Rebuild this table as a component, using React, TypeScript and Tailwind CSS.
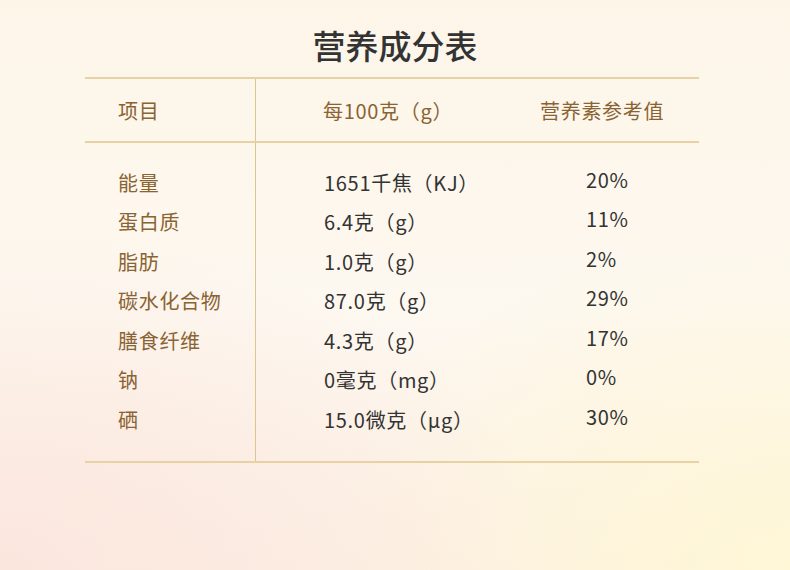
import React from "react";

const rows: [string, string, string][] = [
  ["能量", "1651千焦（KJ）", "20%"],
  ["蛋白质", "6.4克（g）", "11%"],
  ["脂肪", "1.0克（g）", "2%"],
  ["碳水化合物", "87.0克（g）", "29%"],
  ["膳食纤维", "4.3克（g）", "17%"],
  ["钠", "0毫克（mg）", "0%"],
  ["硒", "15.0微克（μg）", "30%"],
];

export default function App() {
  return (
    <div
      className="w-[790px] h-[570px] overflow-hidden bg-[#fdf6ea] bg-[radial-gradient(ellipse_70%_60%_at_0%_100%,#fbe6de_0%,rgba(251,230,222,0)_100%),radial-gradient(ellipse_60%_60%_at_100%_100%,#fff7d6_0%,rgba(255,247,214,0)_100%),linear-gradient(180deg,#fdf5e8_0%,#fdf8f0_55%,#fcf0e4_100%)]"
      style={{ fontFamily: '"Noto Sans CJK SC", "Noto Sans", sans-serif' }}
    >
      <div className="pt-[24px] h-[77px] text-center text-[33px] leading-[42px] font-medium text-[#333333]">
        营养成分表
      </div>
      <div className="ml-[85px] w-[614px] border-t-2 border-b-2 border-[#e6d2a2] tracking-[0.7px]">
        {/* header */}
        <div className="flex h-[64px] border-b-2 border-[#e6d2a2] text-[20px] text-[#8a6332]">
          <div className="w-[171px] border-r border-[#dcc590] pl-[33px] flex items-center pt-[2px]">
            项目
          </div>
          <div className="flex-1 flex items-center pt-[2px]">
            <div className="w-[284px] pl-[67px]">每100克（g）</div>
            <div>营养素参考值</div>
          </div>
        </div>
        {/* body */}
        <div className="flex">
          <div className="w-[171px] border-r border-[#dcc590] pl-[33px] pt-[20px] pb-[21px] text-[20px] text-[#8a6332]">
            {rows.map((r) => (
              <div key={r[0]} className="h-[39.5px] flex items-center">
                {r[0]}
              </div>
            ))}
          </div>
          <div className="flex-1 pt-[20px] pb-[21px] text-[20px] text-[#333333]">
            {rows.map((r) => (
              <div key={r[0]} className="h-[39.5px] flex items-center">
                <div className="w-[330px] pl-[68px]">{r[1]}</div>
                <div className="-mt-[6px]">{r[2]}</div>
              </div>
            ))}
          </div>
        </div>
      </div>
    </div>
  );
}
